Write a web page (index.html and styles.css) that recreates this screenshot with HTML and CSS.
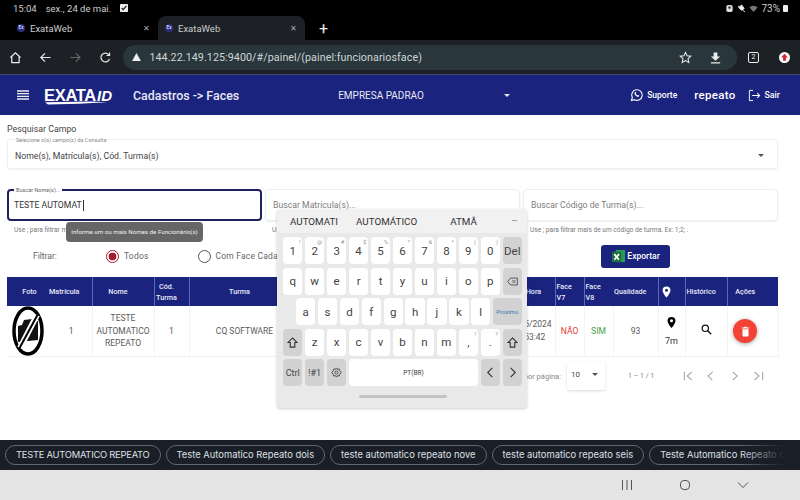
FILE: index.html
```html
<!DOCTYPE html>
<html lang="pt-BR">
<head>
<meta charset="UTF-8">
<meta name="viewport" content="width=device-width, initial-scale=1.0">
<title>ExataWeb</title>
<link rel="stylesheet" href="styles.css">
</head>
<body>

<!-- barra do android -->
<div class="statusbar">
  <span class="clock">15:04</span>
  <span class="clock-date">sex., 24 de mai.</span>
  <svg class="check" viewBox="0 0 10 10"><rect width="10" height="10" rx="1" fill="#eee"/><path d="M2 5l2 2 4-4.500" fill="none" stroke="#222" stroke-width="1.600"/></svg>
  <span class="status-right">
    <svg class="st-icon" viewBox="0 0 10 10"><rect x="1.500" y="1" width="7" height="8" rx="2" fill="#ddd"/><circle cx="5" cy="4" r="1.500" fill="#444"/></svg>
    <svg class="st-icon" viewBox="0 0 10 10"><path d="M1 2l8 7M2 4l3-3 3 4-3 2z" fill="#eee" stroke="#eee"/></svg>
    <svg class="st-icon" viewBox="0 0 10 10"><path d="M0.500 4a6 6 0 0 1 9 0L5 9z" fill="#777"/></svg>
    <span class="battery-text">73%</span>
    <span class="battery"></span>
  </span>
</div>

<!-- abas do chrome -->
<div class="tabstrip">
  <div class="tab">
    <span class="favicon">Ex</span>
    <span class="tab-title">ExataWeb</span>
    <span class="tab-close">&#10005;</span>
  </div>
  <div class="tab tab-active">
    <span class="favicon">Ex</span>
    <span class="tab-title">ExataWeb</span>
    <span class="tab-close">&#10005;</span>
  </div>
  <span class="tab-new">+</span>
</div>

<div class="toolbar">
  <svg class="tb-icon" viewBox="0 0 14 14"><path d="M1.500 7L7 2l5.500 5M3 6v6.500h8V6" fill="none" stroke="#eee" stroke-width="1.300"/></svg>
  <svg class="tb-icon" viewBox="0 0 14 14"><path d="M12.500 7H2M6.500 2.500L2 7l4.500 4.500" fill="none" stroke="#e8e8e8" stroke-width="1.300"/></svg>
  <svg class="tb-icon" viewBox="0 0 14 14"><path d="M1.500 7H12M7.500 2.500L12 7l-4.500 4.500" fill="none" stroke="#666" stroke-width="1.300"/></svg>
  <svg class="tb-icon" viewBox="0 0 14 14"><path d="M11.500 8.500a4.800 4.800 0 1 1-.6-4.200M11.500 1.500v3.300H8.200" fill="none" stroke="#e8e8e8" stroke-width="1.300"/></svg>
  <div class="urlbar">
    <svg class="warn" viewBox="0 0 10 9"><path d="M5 0l5 9H0z" fill="#eee"/></svg>
    <span class="url">144.22.149.125:9400/#/painel/(painel:funcionariosface)</span>
    <svg class="url-star" viewBox="0 0 14 14"><path d="M7 1.500l1.700 3.700 4 .4-3 2.700.9 4L7 10.300l-3.600 2 .9-4-3-2.700 4-.4z" fill="none" stroke="#eee" stroke-width="1.100"/></svg>
    <svg class="url-down" viewBox="0 0 14 14"><path d="M5 1.500h4V6h3L7 10.500 2 6h3zM2 12h10v1.500H2z" fill="#eee"/></svg>
  </div>
  <span class="tab-count">2</span>
  <span class="update"><svg viewBox="0 0 10 10"><path d="M5 1.500L8 5H6.300v3H3.700V5H2z" fill="#d2263a"/></svg></span>
</div>

<!-- cabecalho do sistema -->
<header class="topbar">
  <svg class="menu" viewBox="0 0 12 10"><path d="M0 1h12M0 3.700h12M0 6.400h12M0 9h12" stroke="#eee" stroke-width="1.300"/></svg>
  <div class="logo">
    <span class="logo-exata">EXATA</span><span class="logo-id">ID</span>
    <svg class="logo-swoosh" viewBox="0 0 62 5" preserveAspectRatio="none"><path d="M0 1.500L46 0.500 62 1.500 34 3.500 3 4.500z" fill="#fff"/></svg>
  </div>
  <span class="page-title">Cadastros -&gt; Faces</span>
  <div class="empresa">
    <span>EMPRESA PADRAO</span>
    <span class="caret caret-white"></span>
  </div>
  <svg class="whats" viewBox="0 0 14 14"><path d="M1.500 12.500l.8-3a5.300 5.300 0 1 1 2.200 2.200z" fill="none" stroke="#fff" stroke-width="1.100"/><path d="M5 4.300c-.8.6-.6 1.900.5 3.100 1.200 1.300 2.600 1.800 3.400 1 .5-.5.300-.9 0-1.100l-.9-.4-.6.500c-.6-.2-1.300-.9-1.600-1.600l.5-.6-.5-1c-.2-.3-.5-.3-.8.100z" fill="#fff"/></svg>
  <span class="suporte">Suporte</span>
  <span class="user">repeato</span>
  <svg class="sair-icon" viewBox="0 0 14 14"><path d="M5.500 1.500H1.500v11h4" fill="none" stroke="#fff" stroke-width="1"/><path d="M4.500 7h8M10 4.500L12.500 7 10 9.500" fill="none" stroke="#fff" stroke-width="1.100"/></svg>
  <span class="sair">Sair</span>
</header>

<main class="page">
  <label class="campo-label">Pesquisar Campo</label>
  <div class="select-box">
    <span class="float-label">Selecione o(s) campo(s) da Consulta</span>
    <span>Nome(s), Matrícula(s), Cód. Turma(s)</span>
    <span class="caret"></span>
  </div>

  <div class="search-grid">
    <div class="search-col">
      <div class="field field-active">
        <span class="float-label float-active">Buscar Nome(s)...</span>
        <span class="typed">TESTE AUTOMAT</span>
      </div>
      <p class="hint">Use ; para filtrar mais de um nome. Ex: Ana;Rui; .</p>
      <div class="tooltip">Informe um ou mais Nomes de Funcionário(s)</div>
    </div>
    <div class="search-col">
      <div class="field"><span class="placeholder">Buscar Matrícula(s)...</span></div>
      <p class="hint">Use ; para filtrar mais de uma matrícula. Ex: 1;2; .</p>
    </div>
    <div class="search-col">
      <div class="field"><span class="placeholder">Buscar Código de Turma(s)...</span></div>
      <p class="hint">Use ; para filtrar mais de um código de turma. Ex: 1;2; .</p>
    </div>
  </div>

  <div class="filter-row">
    <span class="filter-label">Filtrar:</span>
    <span class="radio radio-on"></span>
    <span class="radio-text">Todos</span>
    <span class="radio radio-second"></span>
    <span class="radio-text">Com Face Cadastrada</span>
    <button class="export">
      <svg viewBox="0 0 16 16"><rect x="5" y="1" width="10" height="13" fill="#2c9a55"/><rect x="1" y="3" width="10" height="11" fill="#1d6f42"/><path d="M3.500 5.500l5 6M8.500 5.500l-5 6" stroke="#fff" stroke-width="1.800"/></svg>
      Exportar
    </button>
  </div>

  <table class="faces">
    <colgroup>
      <col class="c-foto"><col class="c-mat"><col class="c-nome"><col class="c-cod"><col class="c-turma"><col class="c-vazia"><col class="c-hora"><col class="c-face"><col class="c-face"><col class="c-qual"><col class="c-pin"><col class="c-hist"><col class="c-acoes">
    </colgroup>
    <thead>
      <tr>
        <th class="no-line th-foto">Foto</th>
        <th class="th-shift">Matrícula</th>
        <th class="th-shift">Nome</th>
        <th class="th-shift">Cód.<br>Turma</th>
        <th class="th-shift">Turma</th>
        <th></th>
        <th class="th-hora">Hora</th>
        <th class="th-left">Face<br>V7</th>
        <th class="th-left no-line">Face<br>V8</th>
        <th class="th-shift">Qualidade</th>
        <th class="th-shift"><svg class="pin" viewBox="0 0 12 16"><path d="M6 .5a5.300 5.300 0 0 0-5.300 5.300C.7 9.500 6 15.500 6 15.500s5.300-6 5.300-9.700A5.300 5.300 0 0 0 6 .5zm0 7.300a2 2 0 1 1 0-4 2 2 0 0 1 0 4z" fill="#fff"/></svg></th>
        <th class="th-left">Histórico</th>
        <th class="th-acoes">Ações</th>
      </tr>
    </thead>
    <tbody>
      <tr>
        <td class="foto-cell">
          <svg class="foto" viewBox="0 0 32 50">
            <ellipse cx="16" cy="25" rx="14" ry="23" fill="#fff" stroke="#000" stroke-width="3.500"/>
            <path d="M6 20l4-1 2-5 8-1 2 3 4-1v19l-20 2z" fill="#111"/>
            <path d="M25 9L8 42" stroke="#fff" stroke-width="6"/>
            <path d="M26 8L7 43" stroke="#000" stroke-width="2"/>
          </svg>
        </td>
        <td class="td-mat">1</td>
        <td>TESTE AUTOMATICO REPEATO</td>
        <td>1</td>
        <td>CQ SOFTWARE</td>
        <td></td>
        <td>24/05/2024<br>15:53:42</td>
        <td class="nao">NÃO</td>
        <td class="sim">SIM</td>
        <td>93</td>
        <td><svg class="pin pin-row" viewBox="0 0 12 16"><path d="M6 .5a5.300 5.300 0 0 0-5.300 5.300C.7 9.500 6 15.500 6 15.500s5.300-6 5.300-9.700A5.300 5.300 0 0 0 6 .5zm0 7.300a2 2 0 1 1 0-4 2 2 0 0 1 0 4z" fill="#000"/></svg><span class="dist">7m</span></td>
        <td><svg class="lupa" viewBox="0 0 14 14"><circle cx="5.500" cy="5.500" r="4" fill="none" stroke="#111" stroke-width="1.500"/><path d="M8.500 8.500l4.500 4.500" stroke="#111" stroke-width="1.700"/></svg></td>
        <td class="td-acoes"><span class="fab"><svg viewBox="0 0 12 14"><path d="M2 4h8v8.500a1 1 0 0 1-1 1H3a1 1 0 0 1-1-1zM1 1.500h3L4.800.5h2.400L8 1.500h3V3H1z" fill="#fff"/></svg></span></td>
      </tr>
    </tbody>
  </table>

  <div class="paginator">
    <span class="pg-label">Itens por página:</span>
    <span class="pg-select">10<span class="caret"></span></span>
    <span class="pg-range">1 – 1 / 1</span>
    <svg class="pg-icons" viewBox="0 0 96 12"><path d="M1 1v10M10 1L4.500 6l5.500 5M35 1l-5.500 5 5 5M59 1l5.500 5-5.500 5M85 1l5.500 5-5.500 5M95 1v10" fill="none" stroke="#a8a8a8" stroke-width="1.300"/></svg>
  </div>
</main>

<!-- sugestoes de contatos -->
<div class="chips">
  <span class="chip chip-caps">TESTE AUTOMATICO REPEATO</span>
  <span class="chip">Teste Automatico Repeato dois</span>
  <span class="chip">teste automatico repeato nove</span>
  <span class="chip">teste automatico repeato seis</span>
  <span class="chip">Teste Automatico Repeato cinco</span>
  <div class="chips-fade"></div>
</div>

<div class="navbar">
  <svg viewBox="0 0 12 10"><path d="M1.500 0v10M6 0v10M10.500 0v10" stroke="#555" stroke-width="1"/></svg>
  <svg viewBox="0 0 12 10"><rect x="1.500" y=".5" width="9" height="9" rx="3.500" fill="none" stroke="#555" stroke-width="1"/></svg>
  <svg viewBox="0 0 12 10"><path d="M1 2.500L6 7.500 11 2.500" fill="none" stroke="#555" stroke-width="1"/></svg>
</div>

<!-- teclado flutuante -->
<div class="keyboard">
  <div class="suggestions">
    <span class="sug sug-1">AUTOMATI</span>
    <span class="sug sug-2">AUTOMÁTICO</span>
    <span class="sug sug-3">ATMÂ</span>
    <span class="sug-more">&#8226;&#8226;&#8226;</span>
  </div>
  <div class="keys">
    <div class="key-row">
      <span class="key">1<sup>!</sup></span><span class="key">2<sup>@</sup></span><span class="key">3<sup>#</sup></span><span class="key">4<sup>$</sup></span><span class="key">5<sup>%</sup></span><span class="key">6<sup>^</sup></span><span class="key">7<sup>&amp;</sup></span><span class="key">8<sup>*</sup></span><span class="key">9<sup>(</sup></span><span class="key">0<sup>)</sup></span><span class="key key-fn">Del</span>
    </div>
    <div class="key-row">
      <span class="key">q</span><span class="key">w</span><span class="key">e</span><span class="key">r</span><span class="key">t</span><span class="key">y</span><span class="key">u</span><span class="key">i</span><span class="key">o</span><span class="key">p</span>
      <span class="key key-fn"><svg class="k-icon" viewBox="0 0 16 12"><path d="M5 1h10v10H5L1 6z" fill="none" stroke="#444" stroke-width="1.200"/><path d="M8 4l4 4M12 4l-4 4" stroke="#444" stroke-width="1.200"/></svg></span>
    </div>
    <div class="key-row key-row-mid">
      <span class="key">a</span><span class="key">s</span><span class="key">d</span><span class="key">f</span><span class="key">g</span><span class="key">h</span><span class="key">j</span><span class="key">k</span><span class="key">l</span><span class="key key-fn key-next">Próximo</span>
    </div>
    <div class="key-row">
      <span class="key key-fn"><svg class="k-icon" viewBox="0 0 12 12"><path d="M6 1l5 5H8.500v5h-5V6H1z" fill="none" stroke="#333" stroke-width="1.200"/></svg></span>
      <span class="key">z</span><span class="key">x</span><span class="key">c</span><span class="key">v</span><span class="key">b</span><span class="key">n</span><span class="key">m</span><span class="key">,<sup>!</sup></span><span class="key">.<sup>?</sup></span>
      <span class="key key-fn"><svg class="k-icon" viewBox="0 0 12 12"><path d="M6 1l5 5H8.500v5h-5V6H1z" fill="none" stroke="#333" stroke-width="1.200"/></svg></span>
    </div>
    <div class="key-row">
      <span class="key key-fn key-small">Ctrl</span><span class="key key-fn key-small">!#1</span>
      <span class="key key-fn"><svg class="k-icon" viewBox="0 0 12 12"><circle cx="6" cy="6" r="1.700" fill="none" stroke="#444"/><path d="M6 1l1 1.500 2-.3.6 1.900L11 6l-1.400 1.900L9 9.800l-2-.3L6 11 5 9.500l-2 .3-.6-1.900L1 6l1.400-1.900L3 2.200l2 .3z" fill="none" stroke="#444"/></svg></span>
      <span class="key key-space">PT(BR)</span>
      <span class="key key-fn"><svg class="k-icon" viewBox="0 0 12 12"><path d="M8 1L3 6l5 5" fill="none" stroke="#333" stroke-width="1.200"/></svg></span>
      <span class="key key-fn"><svg class="k-icon" viewBox="0 0 12 12"><path d="M4 1l5 5-5 5" fill="none" stroke="#333" stroke-width="1.200"/></svg></span>
    </div>
  </div>
  <div class="home-bar"></div>
</div>

</body>
</html>
```

FILE: styles.css
```css
* {
  box-sizing: border-box;
}
html, body {
  margin: 0;
  width: 800px;
  height: 500px;
  overflow: hidden;
}
body {
  position: relative;
  display: flex;
  flex-direction: column;
  font-family: Roboto, "Liberation Sans", sans-serif;
  background: #fff;
  color: #333;
}

/* status */
.statusbar {
  height: 16px;
  background: #000;
  color: #ccc;
  display: flex;
  align-items: center;
  padding: 0 12px 0 13px;
  font-size: 9.5px;
}
.clock-date {
  margin-left: 9px;
}
.check {
  width: 8px;
  height: 8px;
  margin-left: 9px;
}
.status-right {
  margin-left: auto;
  display: flex;
  align-items: center;
  gap: 3px;
}
.st-icon {
  width: 9px;
  height: 9px;
}
.battery-text {
  font-size: 10px;
}
.battery {
  width: 5px;
  height: 7px;
  background: #eee;
  border-radius: 1px;
}

/* abas */
.tabstrip {
  height: 24px;
  background: #000;
  display: flex;
  align-items: center;
  color: #ccc;
}
.tab {
  width: 158px;
  height: 24px;
  display: flex;
  align-items: center;
  padding: 0 8px 0 17px;
  font-size: 9.5px;
}
.tab-active {
  width: 147px;
  padding-left: 7px;
  background: #1d2125;
  border-radius: 8px 8px 0 0;
}
.favicon {
  width: 8px;
  height: 8px;
  border-radius: 50%;
  background: #2b2f80;
  color: #fff;
  font-size: 4.5px;
  line-height: 8px;
  text-align: center;
  margin-right: 5px;
}
.tab-close {
  margin-left: auto;
  font-size: 8px;
  color: #aaa;
}
.tab-new {
  margin-left: 14px;
  font-size: 16px;
  color: #eee;
}

/* barra do navegador */
.toolbar {
  height: 35px;
  background: #1d2125;
  border-bottom: 1px solid #3f4a70;
  display: flex;
  align-items: center;
  padding: 0 10px 0 9px;
}
.tb-icon {
  width: 13px;
  height: 13px;
  margin-right: 17px;
}
.urlbar {
  width: 620px;
  height: 25px;
  margin-left: -5px;
  background: #29363b;
  border-radius: 13px;
  display: flex;
  align-items: center;
  padding: 0 15px 0 9px;
  color: #d0d5d5;
  font-size: 10.7px;
  letter-spacing: 0.08px;
}
.warn {
  width: 9px;
  height: 8px;
  margin-right: 8px;
}
.url-star {
  width: 13px;
  height: 13px;
  margin-left: auto;
  margin-right: 17px;
}
.url-down {
  width: 13px;
  height: 13px;
}
.tab-count {
  width: 11px;
  height: 11px;
  margin-left: 11px;
  border: 1px solid #eee;
  border-radius: 2px;
  color: #eee;
  font-size: 7px;
  line-height: 9px;
  text-align: center;
}
.update {
  width: 11px;
  height: 11px;
  margin-left: 20px;
  background: #fff;
  border-radius: 50%;
  display: flex;
}

/* topo */
.topbar {
  height: 40px;
  background: #1a237e;
  color: #fff;
  display: flex;
  align-items: center;
  padding-left: 17px;
}
.menu {
  width: 12px;
  height: 10px;
}
.logo {
  position: relative;
  margin-left: 15px;
  width: 80px;
  font-family: "Liberation Sans", sans-serif;
  font-weight: bold;
  line-height: 16px;
}
.logo-exata {
  font-size: 16.5px;
  letter-spacing: -0.3px;
}
.logo-id {
  font-size: 15px;
  font-style: italic;
  margin-left: 1px;
}
.logo-swoosh {
  position: absolute;
  left: 1px;
  top: 14px;
  width: 62px;
  height: 4px;
}
.page-title {
  margin-left: 9px;
  font-size: 12.4px;
  font-weight: 500;
  color: #e8e8f4;
}
.empresa {
  margin-left: 99px;
  width: 175px;
  display: flex;
  align-items: center;
  justify-content: space-between;
  font-size: 10px;
  color: #e8e8f4;
  padding-right: 3px;
}
.whats {
  margin-left: 117px;
  width: 14px;
  height: 14px;
}
.suporte {
  margin-left: 3px;
  font-size: 8.5px;
  font-weight: 500;
}
.user {
  margin-left: 17px;
  font-size: 11.5px;
  font-weight: 500;
  letter-spacing: 0.3px;
}
.sair-icon {
  margin-left: 12px;
  width: 13px;
  height: 13px;
}
.sair {
  margin-left: 4px;
  font-size: 8.8px;
  font-weight: 500;
}
.caret {
  display: inline-block;
  border-left: 3px solid transparent;
  border-right: 3px solid transparent;
  border-top: 3px solid #555;
}
.caret-white {
  border-top-color: #e8e8f4;
}

/* conteudo */
.page {
  position: relative;
  height: 325px;
  padding: 9px 22px 0 7px;
  background: #fff;
}
.campo-label {
  display: block;
  font-size: 8.8px;
  line-height: 11px;
  color: #444;
}
.select-box {
  position: relative;
  height: 30px;
  margin-top: 4px;
  display: flex;
  align-items: center;
  justify-content: space-between;
  padding: 3px 13px 0 7px;
  border: 1px solid #eef0f2;
  box-shadow: 0 1px 2px rgba(0, 0, 0, 0.06);
  border-radius: 3px;
  font-size: 8.7px;
  color: #444;
}
.float-label {
  position: absolute;
  left: 7px;
  top: -3px;
  font-size: 5.5px;
  line-height: 7px;
  background: #fff;
  padding: 0 1px;
  color: #888;
}
.search-grid {
  display: grid;
  grid-template-columns: repeat(3, 255px);
  gap: 3px;
  margin-top: 20px;
}
.search-col {
  position: relative;
}
.field {
  height: 32px;
  display: flex;
  align-items: center;
  padding: 0 7px;
  border: 1px solid #eceef0;
  box-shadow: 0 1px 2px rgba(0, 0, 0, 0.07);
  border-radius: 4px;
  font-size: 8.7px;
}
.field-active {
  position: relative;
  border: 2px solid #1d2160;
  padding: 0 5px;
  box-shadow: none;
}
.float-active {
  left: 5px;
  top: -4px;
  padding: 0 2px;
  color: #666;
}
.typed {
  color: #333;
  border-right: 1px solid #333;
  padding-right: 1px;
  line-height: 11px;
}
.placeholder {
  color: #7d7d7d;
}
.hint {
  margin: 5px 0 0 7px;
  font-size: 6.6px;
  line-height: 8px;
  color: #777;
  white-space: nowrap;
  overflow: hidden;
}
.tooltip {
  position: absolute;
  left: 59px;
  top: 33px;
  width: 137px;
  height: 20px;
  background: #666;
  color: #eee;
  font-size: 6.2px;
  line-height: 20px;
  text-align: center;
  border-radius: 4px;
}

/* filtro */
.filter-row {
  height: 26px;
  margin-top: 9px;
  display: flex;
  align-items: center;
  font-size: 8.5px;
  color: #666;
  padding-left: 26px;
}
.filter-label {
  width: 73px;
}
.radio {
  width: 13px;
  height: 13px;
  border: 1px solid #555;
  border-radius: 50%;
  background: #fff;
}
.radio-on {
  border: 1.5px solid #a51c30;
  background: radial-gradient(circle, #a51c30 0 3.6px, #fff 4.2px);
}
.radio-second {
  margin-left: 49px;
}
.radio-text {
  margin-left: 5px;
  letter-spacing: 0.2px;
}
.export {
  margin-left: auto;
  margin-right: 108px;
  width: 69px;
  height: 23px;
  display: flex;
  align-items: center;
  justify-content: center;
  gap: 1px;
  background: #1a237e;
  border: none;
  border-radius: 3px;
  color: #fff;
  font-family: Roboto, sans-serif;
  font-size: 8.5px;
  font-weight: 500;
  padding: 0;
}
.export svg {
  width: 15px;
  height: 15px;
}

/* tabela */
.faces {
  width: 771px;
  margin-top: 8px;
  table-layout: fixed;
  border-collapse: collapse;
  font-size: 8.5px;
}
.c-foto { width: 40px; }
.c-mat { width: 45px; }
.c-nome { width: 62px; }
.c-cod { width: 35px; }
.c-turma { width: 111px; }
.c-vazia { width: 203px; }
.c-hora { width: 52px; }
.c-face { width: 29px; }
.c-qual { width: 45px; }
.c-pin { width: 27px; }
.c-hist { width: 42px; }
.c-acoes { width: 51px; }
.faces th {
  height: 29px;
  background: #1a237e;
  color: #e8ecf8;
  font-size: 7.2px;
  font-weight: 500;
  line-height: 11px;
  padding: 0;
  border-right: 1px solid #5e68b8;
  text-align: center;
}
.faces th:last-child {
  border-right: none;
}
.faces th.no-line {
  border-right: none;
}
.faces th.th-foto {
  padding-left: 5px;
}
.faces th.th-shift {
  padding-right: 10px;
}
.faces th.th-hora {
  padding-left: 9px;
}
.faces th.th-left {
  text-align: left;
  padding-left: 1px;
}
.faces th.th-acoes {
  padding-right: 15px;
}
.faces td {
  height: 50px;
  padding: 0;
  text-align: center;
  border-right: 1px solid #f5f5f5;
  border-bottom: 1px solid #f2f2f2;
  line-height: 12.8px;
  color: #5a5a5a;
}
.faces td.foto-cell {
  border-right: none;
  vertical-align: top;
}
.foto {
  display: block;
  width: 32px;
  height: 50px;
  margin-left: 5px;
}
.faces td.td-mat {
  padding-left: 4px;
}
.faces td.td-acoes {
  padding-right: 15px;
}
.faces td.nao {
  color: #e53935;
}
.faces td.sim {
  color: #43a047;
}
.pin {
  width: 9px;
  height: 12px;
  display: inline-block;
  vertical-align: middle;
}
.pin-row {
  display: block;
  margin: 0 auto 7px;
  width: 9px;
  height: 13px;
}
.dist {
  display: block;
  font-size: 9px;
  line-height: 10px;
  color: #333;
}
.lupa {
  width: 11px;
  height: 11px;
}
.fab {
  display: inline-flex;
  align-items: center;
  justify-content: center;
  width: 24px;
  height: 24px;
  background: #f44336;
  border-radius: 50%;
  box-shadow: 0 1px 4px rgba(0, 0, 0, 0.35);
}
.fab svg {
  width: 9px;
  height: 11px;
}

/* paginacao */
.paginator {
  height: 28px;
  margin-top: 5px;
  display: flex;
  align-items: center;
  font-size: 7.5px;
  color: #888;
  padding-left: 506px;
}
.pg-label {
  width: 48px;
  display: flex;
  justify-content: flex-end;
  white-space: nowrap;
}
.pg-select {
  width: 38px;
  height: 28px;
  margin-left: 6px;
  display: flex;
  align-items: center;
  justify-content: space-between;
  padding: 0 7px 3px 4px;
  box-shadow: 0 1px 3px rgba(0, 0, 0, 0.15);
  border-radius: 3px;
  color: #444;
  font-size: 8px;
}
.pg-range {
  margin-left: 23px;
  width: 28px;
  font-size: 7px;
  white-space: nowrap;
}
.pg-icons {
  margin-left: 25px;
  width: 85px;
  height: 10px;
}

/* chips */
.chips {
  position: relative;
  height: 30px;
  background: #1a1f27;
  display: flex;
  align-items: center;
  gap: 5px;
  padding-left: 5px;
  overflow: hidden;
  font-family: Inter, "Noto Sans", sans-serif;
}
.chip {
  flex: none;
  height: 20px;
  padding: 0 10px;
  border: 1px solid #626870;
  border-radius: 10px;
  color: #dde0e4;
  font-size: 9.4px;
  line-height: 18px;
  white-space: nowrap;
}
.chip-caps {
  letter-spacing: -0.25px;
}
.chips-fade {
  position: absolute;
  right: 0;
  top: 0;
  bottom: 0;
  width: 60px;
  background: linear-gradient(to right, rgba(26, 31, 39, 0), #1a1f27 75%);
}
.navbar {
  height: 30px;
  background: #e4e4e4;
  display: flex;
  align-items: center;
  justify-content: flex-end;
  gap: 46px;
  padding-right: 51px;
}
.navbar svg {
  width: 12px;
  height: 10px;
}

/* teclado */
.keyboard {
  position: absolute;
  left: 277px;
  top: 209px;
  width: 250px;
  height: 199px;
  background: #e9e9e9;
  border-radius: 4px;
  box-shadow: 0 1px 3px rgba(0, 0, 0, 0.2);
  padding: 0 5px 0 6px;
  color: #333;
}
.suggestions {
  height: 24px;
  background: #f1f1f1;
  margin: 0 -5px 0 -6px;
  border-radius: 4px 4px 0 0;
  position: relative;
  display: flex;
  align-items: center;
  font-size: 9.8px;
  padding-left: 13px;
}
.sug-2 {
  margin-left: 18px;
}
.sug-3 {
  margin-left: 33px;
}
.sug-more {
  margin-left: auto;
  margin-right: 10px;
  font-size: 5px;
  color: #555;
}
.keys {
  margin-top: 4px;
  display: flex;
  flex-direction: column;
  gap: 3.5px;
}
.key-row {
  display: flex;
  gap: 2.5px;
  height: 27px;
}
.key-row-mid {
  padding-left: 13px;
}
.key {
  position: relative;
  flex: 1 1 0;
  min-width: 0;
  display: flex;
  align-items: center;
  justify-content: center;
  background: #fff;
  border-radius: 4px;
  font-size: 11.5px;
  color: #444;
}
.key sup {
  position: absolute;
  right: 2px;
  top: 2px;
  font-size: 6px;
  line-height: 6px;
  color: #999;
}
.key-fn {
  background: #d2d2d2;
}
.key-small {
  font-size: 9px;
}
.key-next {
  flex: 1.5 1 0;
  font-size: 6px;
  color: #3b76b8;
}
.key-space {
  flex: 6.65 1 0;
  font-size: 6.5px;
}
.k-icon {
  width: 11px;
  height: 11px;
}
.home-bar {
  width: 88px;
  height: 3px;
  margin: 9px auto 0;
  background: #c4c4c4;
  border-radius: 2px;
}
```
